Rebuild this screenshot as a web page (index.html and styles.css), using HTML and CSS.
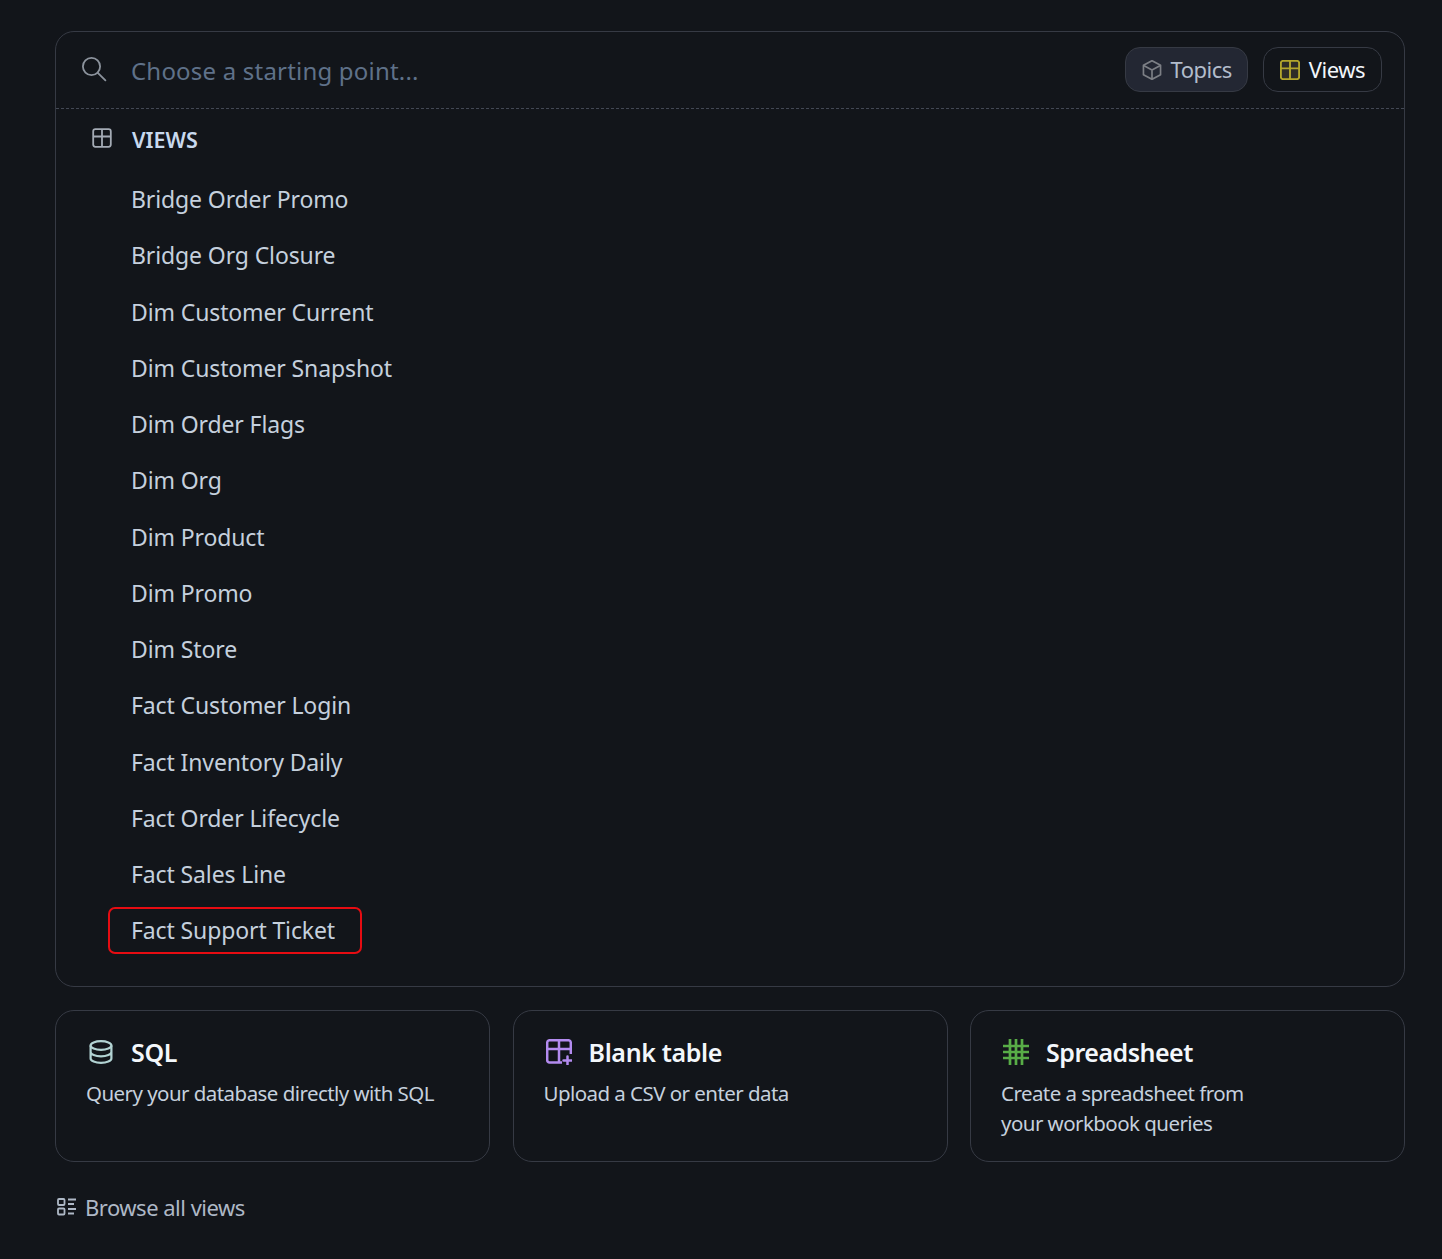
FILE: index.html
```html
<!DOCTYPE html>
<html lang="en">
<head>
<meta charset="utf-8">
<title>Choose a starting point</title>
<link rel="stylesheet" href="styles.css">
</head>
<body>
<main class="page">
  <section class="panel">
    <header class="search">
      <svg class="search-icon" viewBox="0 0 26 26" fill="none" stroke="currentColor" stroke-width="1.8" stroke-linecap="round"><circle cx="10.5" cy="10.5" r="8.6"/><path d="M16.8 16.8l7.6 7.6"/></svg>
      <span class="placeholder">Choose a starting point...</span>
      <div class="filters">
        <button class="chip chip-active">
          <svg class="chip-icon cube" viewBox="1 1 18 18" fill="none" stroke="currentColor" stroke-width="1.5" stroke-linejoin="round"><path d="M10 1.600l7.700 4.200v8.400L10 18.400l-7.700-4.200V5.800z"/><path d="M2.500 5.900L10 10l7.500-4.100M10 10v8.200"/></svg>
          Topics
        </button>
        <button class="chip chip-views">
          <svg class="chip-icon grid-yellow" viewBox="1 1 18 18" stroke="currentColor" stroke-width="1.700"><rect x="1.800" y="1.800" width="16.400" height="16.400" rx="2" fill="#2e2c27"/><path d="M1.800 8.500h16.400M10 1.800v16.400" fill="none"/></svg>
          Views
        </button>
      </div>
    </header>
    <div class="group-title">
      <svg class="group-icon" viewBox="0 0 20 20" fill="none" stroke="currentColor" stroke-width="1.800"><rect x="1.200" y="1.200" width="17.600" height="17.600" rx="2.200"/><path d="M1.200 8.500h17.600M10 1.200v17.600"/></svg>
      <span>VIEWS</span>
    </div>
    <ul class="items">
      <li class="item">Bridge Order Promo</li>
      <li class="item">Bridge Org Closure</li>
      <li class="item">Dim Customer Current</li>
      <li class="item">Dim Customer Snapshot</li>
      <li class="item">Dim Order Flags</li>
      <li class="item">Dim Org</li>
      <li class="item">Dim Product</li>
      <li class="item">Dim Promo</li>
      <li class="item">Dim Store</li>
      <li class="item">Fact Customer Login</li>
      <li class="item">Fact Inventory Daily</li>
      <li class="item">Fact Order Lifecycle</li>
      <li class="item">Fact Sales Line</li>
      <li class="item item-selected">Fact Support Ticket</li>
    </ul>
  </section>
  <section class="cards">
    <article class="card">
      <h3 class="card-title">
        <svg class="card-icon sql" viewBox="0 0 24 24" fill="none" stroke="currentColor" stroke-width="2.200"><ellipse cx="12" cy="5.500" rx="10.400" ry="4.300"/><path d="M1.600 5.500v13c0 2.400 4.700 4.300 10.400 4.300s10.400-1.900 10.400-4.300v-13M1.600 12c0 2.400 4.700 4.300 10.400 4.300S22.400 14.400 22.400 12"/></svg>
        SQL
      </h3>
      <p class="card-text">Query your database directly with SQL</p>
    </article>
    <article class="card">
      <h3 class="card-title title-blank">
        <svg class="card-icon blank" viewBox="0 0 26 26" fill="none" stroke="currentColor" stroke-width="2.500"><path d="M16 23.500H3.500A2.500 2.500 0 0 1 1.200 21V3.500A2.500 2.500 0 0 1 3.500 1.200h19A2.500 2.500 0 0 1 24.800 3.500V15M1.200 10h23.600M13 1.200v22.300"/><path d="M21.500 17.500v8M17.500 21.500h8" stroke-linecap="round"/></svg>
        Blank table
      </h3>
      <p class="card-text">Upload a CSV or enter data</p>
    </article>
    <article class="card">
      <h3 class="card-title title-sheet">
        <svg class="card-icon sheet" viewBox="0 0 26 26" fill="none" stroke="currentColor" stroke-width="2.700"><path d="M7 0v26M13 0v26M19 0v26M0 7h26M0 13h26M0 19h26"/></svg>
        Spreadsheet
      </h3>
      <p class="card-text">Create a spreadsheet from<br>your workbook queries</p>
    </article>
  </section>
  <a class="browse">
    <svg class="browse-icon" viewBox="0 0 20 18" fill="none" stroke="currentColor" stroke-width="1.800"><rect x="1" y="1" width="6.500" height="6" rx="1"/><rect x="1" y="10.500" width="6.500" height="6" rx="1"/><path d="M11 1.500h8M11 6h6M11 11h8M11 15.500h6"/></svg>
    Browse all views
  </a>
</main>
</body>
</html>
```

FILE: styles.css
```css
* { box-sizing: border-box; }
html, body { margin: 0; padding: 0; height: 100%; }
body {
  background: #12151a;
  color: #c5d0dd;
  font-family: "Noto Sans", "Open Sans", sans-serif;
  overflow: hidden;
}
.page { padding: 31px 37px 0 55px; }
.panel {
  height: 956px;
  border: 1px solid #363a44;
  border-radius: 19px;
}
.search {
  display: flex;
  align-items: center;
  height: 77px;
  padding: 0 22px 1px 25px;
  border-bottom: 1px dashed #434854;
}
.search-icon { width: 26px; height: 26px; color: #8c939d; flex: none; margin-top: -1px; }
.placeholder {
  margin-left: 24px;
  margin-top: 2px;
  font-size: 24px;
  color: #5f7189;
  letter-spacing: 0.2px;
}
.filters { margin-left: auto; display: flex; gap: 15px; }
.chip {
  display: flex;
  align-items: center;
  height: 45px;
  padding: 0 16px 2px 16px;
  border: 1px solid #363a44;
  border-radius: 15px;
  background: transparent;
  font: inherit;
  font-size: 22px;
  letter-spacing: -0.5px;
  color: #f2f6fb;
}
.chip-active { background: #232733; color: #b2bccb; padding-right: 15px; }
.chip-icon { width: 20px; height: 20px; margin-right: 9px; flex: none; margin-top: 2px; }
.cube { color: #7c7f85; }
.grid-yellow { color: #b3a62c; }
.group-title {
  display: flex;
  align-items: center;
  height: 61px;
  padding-left: 35px;
  font-size: 21.500px;
  font-weight: 600;
  letter-spacing: 0;
  color: #c8d9ee;
}
.group-icon { width: 20px; height: 20px; margin-left: 1px; margin-right: 20px; color: #a4abb5; flex: none; margin-top: -3px; }
.items {
  list-style: none;
  margin: 0;
  padding: 6px 0 0 52px;
  display: flex;
  flex-direction: column;
  align-items: flex-start;
}
.item {
  height: 47px;
  margin-bottom: 9.250px;
  padding: 0 25px 0 21px;
  line-height: 43px;
  font-size: 23px;
  letter-spacing: -0.12px;
  border: 2px solid transparent;
  border-radius: 7px;
  color: #c5d0dd;
}
.item-selected { border-color: #e60c12; }
.cards {
  display: grid;
  grid-template-columns: repeat(3, 1fr);
  gap: 22.500px;
  margin-top: 23px;
}
.card {
  height: 152px;
  padding: 23px 30px;
  border: 1px solid #363a44;
  border-radius: 19px;
}
.card-title {
  display: flex;
  align-items: center;
  margin: 0;
  height: 36px;
  font-size: 25px;
  font-weight: 600;
  letter-spacing: -0.35px;
  color: #f3f7fb;
}
.card-icon { width: 24px; height: 24px; margin-left: 3px; margin-right: 18px; flex: none; }
.title-blank .card-icon { width: 26px; height: 26px; margin-left: 2px; margin-right: 17px; }
.title-sheet .card-icon { width: 26px; height: 26px; margin-left: 2px; margin-right: 17px; }
.title-sheet { letter-spacing: -0.5px; }
.sql { color: #b2d3d3; }
.blank { color: #b38bef; }
.sheet { color: #58ad47; }
.card-text {
  margin: 8px 0 0;
  font-size: 20.500px;
  line-height: 30px;
  letter-spacing: -0.55px;
  color: #c5d0dd;
}
.browse {
  display: flex;
  align-items: center;
  margin-top: 30px;
  font-size: 22px;
  letter-spacing: -0.5px;
  color: #aeb8c6;
}
.browse-icon { width: 20px; height: 18px; margin-left: 2px; margin-right: 8px; flex: none; }
```
